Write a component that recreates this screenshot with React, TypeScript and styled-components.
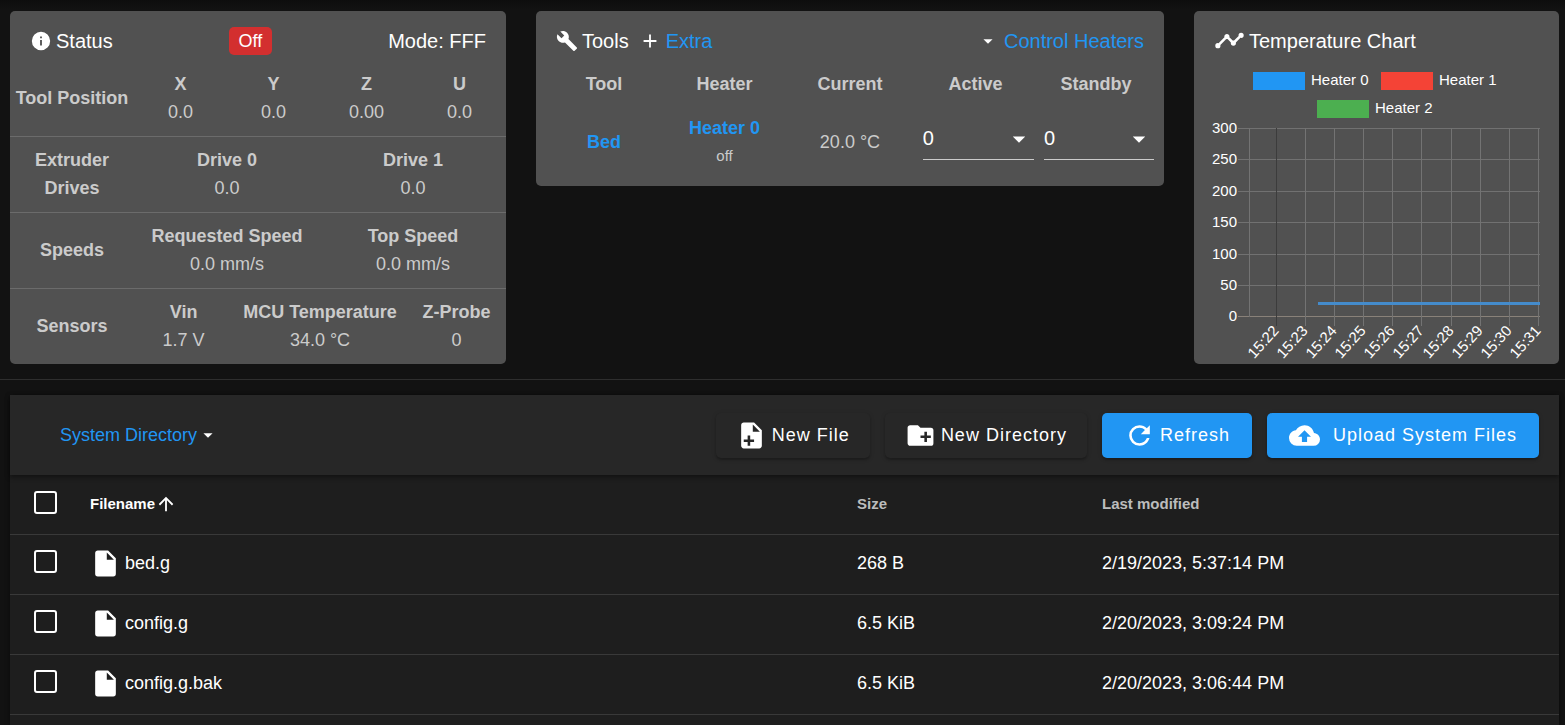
import React from "react";
import styled, { createGlobalStyle } from "styled-components";

const GlobalStyle = createGlobalStyle`
  *, *::before, *::after { box-sizing: border-box; }
  html { overflow: hidden; }
  body {
    margin: 0;
    background: #121212;
    color: #fff;
    font-family: "Liberation Sans", Arial, sans-serif;
    font-size: 18px;
    line-height: 28px;
  }
`;

const icons = {
  information:
    "M13,9H11V7H13M13,17H11V11H13M12,2A10,10 0 0,0 2,12A10,10 0 0,0 12,22A10,10 0 0,0 22,12A10,10 0 0,0 12,2Z",
  wrench:
    "M22.7,19L13.6,9.9C14.5,7.6 14,4.9 12.1,3C10.1,1 7.1,0.6 4.7,1.7L9,6L6,9L1.6,4.7C0.4,7.1 0.9,10.1 2.9,12.1C4.8,14 7.5,14.5 9.8,13.6L18.9,22.7C19.3,23.1 19.9,23.1 20.3,22.7L22.6,20.4C23.1,20 23.1,19.3 22.7,19Z",
  plus: "M19,13H13V19H11V13H5V11H11V5H13V11H19V13Z",
  menuDown: "M7,10L12,15L17,10H7Z",
  timeline:
    "M3,14L3.5,14.07L8.07,9.5C7.89,8.85 8.06,8.11 8.59,7.59C9.37,6.8 10.63,6.8 11.41,7.59C11.94,8.11 12.11,8.85 11.93,9.5L14.5,12.07L15,12C15.18,12 15.35,12 15.5,12.07L19.07,8.5C19,8.35 19,8.18 19,8A2,2 0 0,1 21,6A2,2 0 0,1 23,8A2,2 0 0,1 21,10C20.82,10 20.65,10 20.5,9.93L16.93,13.5C17,13.65 17,13.82 17,14A2,2 0 0,1 15,16A2,2 0 0,1 13,14L13.07,13.5L10.5,10.93C10.18,11 9.82,11 9.5,10.93L4.93,15.5L5,16A2,2 0 0,1 3,18A2,2 0 0,1 1,16A2,2 0 0,1 3,14Z",
  file: "M13,9V3.5L18.5,9M6,2C4.89,2 4,2.89 4,4V20A2,2 0 0,0 6,22H18A2,2 0 0,0 20,20V8L14,2H6Z",
  filePlus:
    "M14 2H6C4.89 2 4 2.89 4 4V20C4 21.11 4.89 22 6 22H18C19.11 22 20 21.11 20 20V8L14 2M11 15V12H9V15H6V17H9V20H11V17H14V15H11M13 9V3.5L18.5 9H13Z",
  folderPlus:
    "M10,4L12,6H20A2,2 0 0,1 22,8V18A2,2 0 0,1 20,20H4C2.89,20 2,19.1 2,18V6C2,4.89 2.89,4 4,4H10M15,9V12H12V14H15V17H17V14H20V12H17V9H15Z",
  refresh:
    "M17.65,6.35C16.2,4.9 14.21,4 12,4A8,8 0 0,0 4,12A8,8 0 0,0 12,20C15.73,20 18.84,17.45 19.73,14H17.65C16.83,16.33 14.61,18 12,18A6,6 0 0,1 6,12A6,6 0 0,1 12,6C13.66,6 15.14,6.69 16.22,7.78L13,11H20V4L17.65,6.35Z",
  cloudUpload:
    "M14,13V17H10V13H7L12,8L17,13M19.35,10.03C18.67,6.59 15.64,4 12,4C9.11,4 6.6,5.64 5.35,8.03C2.34,8.36 0,10.9 0,14A6,6 0 0,0 6,20H19A5,5 0 0,0 24,15C24,12.36 21.95,10.22 19.35,10.03Z",
  arrowUp: "M13,20H11V8L5.5,13.5L4.08,12.08L12,4.16L19.92,12.08L18.5,13.5L13,8V20Z",
};

const IconSvg = styled.svg<{ $size: number }>`
  display: block;
  flex: none;
  width: ${(p) => p.$size}px;
  height: ${(p) => p.$size}px;
  fill: #fff;
  fill-rule: evenodd;
`;

function Icon({ name, size = 22, className }: { name: keyof typeof icons; size?: number; className?: string }) {
  return (
    <IconSvg $size={size} viewBox="0 0 24 24" aria-hidden="true" className={className}>
      <path d={icons[name]} />
    </IconSvg>
  );
}

const Page = styled.div`
  min-height: 100vh;
  display: flex;
  flex-direction: column;
  background: linear-gradient(#0d0d0d, #121212 10px);
`;

const Dashboard = styled.section`
  display: grid;
  grid-template-columns: 496fr 628fr 365fr;
  align-items: start;
  gap: 30px;
  padding: 11px 6px 15px 10px;
`;

const Card = styled.article`
  min-width: 0;
  border-radius: 5px;
  overflow: hidden;
  background: #515151;
`;

const CardHeader = styled.header`
  display: flex;
  align-items: center;
  justify-content: space-between;
  height: 49px;
  padding: 10px 20px 0;
  font-size: 20px;
`;

const CardTitle = styled.h2`
  display: flex;
  align-items: center;
  gap: 4px;
  margin: 0;
  font-size: 20px;
  font-weight: 400;
`;

const TitleGroup = styled.div`
  display: flex;
  align-items: center;
  gap: 10px;
`;

const LinkGroup = styled.span`
  display: flex;
  align-items: center;
  gap: 5px;
`;

const Link = styled.a`
  color: #2196f3;
  text-decoration: none;
`;

const StatusChip = styled.span`
  padding: 0 10px;
  border-radius: 5px;
  background: #d32f2f;
  font-size: 18px;
  line-height: 28px;
`;

const StatusRow = styled.div`
  display: flex;
  align-items: center;
  min-height: 76px;
  padding: 9px 0 10px;
  border-top: 1px solid #6b6b6b;
  color: #cbcbcb;
  text-align: center;

  &:first-of-type {
    border-top-color: transparent;
  }
`;

const RowLabel = styled.strong`
  flex: none;
  width: 25%;
  padding: 0 5px;
`;

const Reading = styled.div`
  display: flex;
  flex-direction: column;
  flex: 1 1 0;
  padding: 0 10px;
  white-space: nowrap;
`;

const ToolsBody = styled.div`
  padding: 0 8px 10px;
`;

const ToolsTable = styled.table`
  width: 100%;
  table-layout: fixed;
  border-collapse: collapse;
  color: #cbcbcb;
  text-align: center;

  th, td { padding: 0; }
  thead th { height: 48px; }
  tbody td { height: 68px; }
`;

const ToolCol = styled.col<{ $share: number }>`
  width: ${(p) => p.$share}%;
`;

const StrongLink = styled(Link)`
  font-weight: 700;
`;

const HeaterState = styled.div`
  font-size: 15px;
`;

const SelectBox = styled.div`
  position: relative;
  margin: 0 2px 7px 8px;
  border-bottom: 1px solid #cbcbcb;
`;

const TemperatureSelect = styled.select`
  display: block;
  width: 100%;
  height: 42px;
  padding: 0;
  border: 0;
  appearance: none;
  background: transparent;
  color: #fff;
  font: inherit;
  font-size: 20px;
`;

const SelectCaret = styled(Icon)`
  position: absolute;
  top: 7px;
  right: 0;
  pointer-events: none;
`;

const ChartSvg = styled.svg`
  display: block;
  width: 100%;
  height: 304px;
  font-size: 15px;
  fill: #fff;
`;

const Divider = styled.hr`
  width: 100%;
  height: 1px;
  margin: 0;
  border: 0;
  background: #2e2e2e;
`;

const FilePanel = styled.section`
  flex: 1;
  margin: 15px 6px 0 10px;
  background: #1e1e1e;
  box-shadow: 0 1px 5px rgba(0, 0, 0, 0.4);
`;

const Toolbar = styled.div`
  position: relative;
  display: flex;
  align-items: center;
  gap: 15px;
  height: 80px;
  padding: 0 20px 0 50px;
  background: #272727;
  box-shadow: 0 2px 5px rgba(0, 0, 0, 0.45);
`;

const DirectoryLink = styled(Link)`
  display: flex;
  align-items: center;
  margin-right: auto;
`;

const ActionButton = styled.button<{ $primary?: boolean; $wide?: boolean }>`
  display: flex;
  align-items: center;
  gap: ${(p) => (p.$wide ? 13 : 5)}px;
  height: 45px;
  padding: 0 ${(p) => (p.$primary ? 22 : 20)}px;
  border: 0;
  border-radius: 5px;
  background: ${(p) => (p.$primary ? "#2196f3" : "#272727")};
  color: #fff;
  font: inherit;
  letter-spacing: 1px;
  white-space: nowrap;
  box-shadow: 0 2px 2px rgba(0, 0, 0, 0.2), 0 1px 5px rgba(0, 0, 0, 0.14);
`;

const FileTable = styled.table`
  width: 100%;
  table-layout: fixed;
  border-collapse: collapse;

  tr { border-bottom: 1px solid #393939; }
  th, td {
    height: 60px;
    padding: 0 0 2px 10px;
    text-align: left;
  }
  th {
    height: 59px;
    padding-bottom: 0;
    color: #bcbcbc;
    font-size: 15px;
  }
`;

const CheckCol = styled.col`
  width: 70px;
`;
const SizeCol = styled.col`
  width: 245px;
`;
const DateCol = styled.col`
  width: 467px;
`;

const Checkbox = styled.input`
  display: block;
  width: 23px;
  height: 23px;
  margin: 0 0 4px 14px;
  appearance: none;
  border: 2px solid #fff;
  border-radius: 3px;
`;

const SortButton = styled.button`
  display: flex;
  align-items: center;
  padding: 0;
  border: 0;
  background: none;
  color: #fff;
  font: inherit;
`;

const FileName = styled.span`
  display: flex;
  align-items: center;
  gap: 4px;
`;

const statusRows = [
  { label: "Tool Position", readings: [["X", "0.0"], ["Y", "0.0"], ["Z", "0.00"], ["U", "0.0"]] },
  { label: "Extruder Drives", readings: [["Drive 0", "0.0"], ["Drive 1", "0.0"]] },
  { label: "Speeds", readings: [["Requested Speed", "0.0 mm/s"], ["Top Speed", "0.0 mm/s"]] },
  { label: "Sensors", readings: [["Vin", "1.7 V"], ["MCU Temperature", "34.0 °C"], ["Z-Probe", "0"]] },
];

const files = [
  { name: "bed.g", size: "268 B", modified: "2/19/2023, 5:37:14 PM" },
  { name: "config.g", size: "6.5 KiB", modified: "2/20/2023, 3:09:24 PM" },
  { name: "config.g.bak", size: "6.5 KiB", modified: "2/20/2023, 3:06:44 PM" },
];

const legend = [
  { label: "Heater 0", color: "#2196f3", x: 59, y: 12 },
  { label: "Heater 1", color: "#f44336", x: 187, y: 12 },
  { label: "Heater 2", color: "#4caf50", x: 123, y: 40 },
];

const levels = [
  { value: 300, y: 68 },
  { value: 250, y: 99 },
  { value: 200, y: 131 },
  { value: 150, y: 162 },
  { value: 100, y: 194 },
  { value: 50, y: 225 },
  { value: 0, y: 256 },
];

const times = [
  { label: "15:22", x: 82 },
  { label: "15:23", x: 111 },
  { label: "15:24", x: 140 },
  { label: "15:25", x: 169 },
  { label: "15:26", x: 198 },
  { label: "15:27", x: 227 },
  { label: "15:28", x: 257 },
  { label: "15:29", x: 286 },
  { label: "15:30", x: 315 },
  { label: "15:31", x: 344 },
];

function TemperatureChart() {
  return (
    <ChartSvg viewBox="0 0 365 304" role="img" aria-label="Temperature history of the heaters">
      {legend.map((item) => (
        <g key={item.label}>
          <rect x={item.x} y={item.y} width="52" height="18" fill={item.color} />
          <text x={item.x + 58} y={item.y + 13}>{item.label}</text>
        </g>
      ))}
      {levels.map((level) => (
        <g key={level.value}>
          <rect x="44" y={level.y} width="302" height="1" fill={level.value ? "#717171" : "#898179"} />
          <text x="43" y={level.y + 5} textAnchor="end">{level.value}</text>
        </g>
      ))}
      <rect x="55" y="68" width="1" height="189" fill="#737373" />
      {times.map((time, i) => (
        <g key={time.label}>
          <rect x={time.x} y="68" width="1" height="198" fill={i ? "#737373" : "#3c3c3c"} />
          <text transform={`translate(${time.x + 2} 270) rotate(-48)`} textAnchor="end" y="2">
            {time.label}
          </text>
        </g>
      ))}
      <rect x="124" y="242" width="222" height="3" fill="#448bcb" />
    </ChartSvg>
  );
}

function TemperatureField({ label }: { label: string }) {
  return (
    <SelectBox>
      <TemperatureSelect aria-label={label} defaultValue="0">
        <option value="0">0</option>
      </TemperatureSelect>
      <SelectCaret name="menuDown" size={30} />
    </SelectBox>
  );
}

export default function App() {
  return (
    <>
      <GlobalStyle />
      <Page>
        <Dashboard>
          <Card>
            <CardHeader>
              <CardTitle><Icon name="information" />Status</CardTitle>
              <StatusChip>Off</StatusChip>
              <span>Mode: FFF</span>
            </CardHeader>
            {statusRows.map((row) => (
              <StatusRow key={row.label}>
                <RowLabel>{row.label}</RowLabel>
                {row.readings.map(([name, value]) => (
                  <Reading key={name}>
                    <strong>{name}</strong>
                    <span>{value}</span>
                  </Reading>
                ))}
              </StatusRow>
            ))}
          </Card>

          <Card>
            <CardHeader>
              <TitleGroup>
                <CardTitle><Icon name="wrench" />Tools</CardTitle>
                <LinkGroup>
                  <Icon name="plus" />
                  <Link href="#extra">Extra</Link>
                </LinkGroup>
              </TitleGroup>
              <LinkGroup>
                <Icon name="menuDown" />
                <Link href="#heaters">Control Heaters</Link>
              </LinkGroup>
            </CardHeader>
            <ToolsBody>
              <ToolsTable>
                <colgroup>
                  <ToolCol $share={19.6} />
                  <ToolCol $share={19.8} />
                  <ToolCol $share={21.2} />
                  <ToolCol $share={19.8} />
                  <ToolCol $share={19.6} />
                </colgroup>
                <thead>
                  <tr>
                    <th>Tool</th>
                    <th>Heater</th>
                    <th>Current</th>
                    <th>Active</th>
                    <th>Standby</th>
                  </tr>
                </thead>
                <tbody>
                  <tr>
                    <td><StrongLink href="#bed">Bed</StrongLink></td>
                    <td>
                      <StrongLink href="#heater-0">Heater 0</StrongLink>
                      <HeaterState>off</HeaterState>
                    </td>
                    <td>20.0 °C</td>
                    <td><TemperatureField label="Active temperature" /></td>
                    <td><TemperatureField label="Standby temperature" /></td>
                  </tr>
                </tbody>
              </ToolsTable>
            </ToolsBody>
          </Card>

          <Card>
            <CardHeader>
              <CardTitle><Icon name="timeline" size={31} />Temperature Chart</CardTitle>
            </CardHeader>
            <TemperatureChart />
          </Card>
        </Dashboard>

        <Divider />

        <FilePanel>
          <Toolbar>
            <DirectoryLink href="#system">System Directory<Icon name="menuDown" /></DirectoryLink>
            <ActionButton type="button"><Icon name="filePlus" size={31} />New File</ActionButton>
            <ActionButton type="button"><Icon name="folderPlus" size={31} />New Directory</ActionButton>
            <ActionButton type="button" $primary><Icon name="refresh" size={31} />Refresh</ActionButton>
            <ActionButton type="button" $primary $wide>
              <Icon name="cloudUpload" size={31} />Upload System Files
            </ActionButton>
          </Toolbar>
          <FileTable>
            <colgroup>
              <CheckCol />
              <col />
              <SizeCol />
              <DateCol />
            </colgroup>
            <thead>
              <tr>
                <th><Checkbox type="checkbox" aria-label="Select all files" /></th>
                <th><SortButton type="button">Filename<Icon name="arrowUp" /></SortButton></th>
                <th>Size</th>
                <th>Last modified</th>
              </tr>
            </thead>
            <tbody>
              {files.map((file) => (
                <tr key={file.name}>
                  <td><Checkbox type="checkbox" aria-label={`Select ${file.name}`} /></td>
                  <td><FileName><Icon name="file" size={31} />{file.name}</FileName></td>
                  <td>{file.size}</td>
                  <td>{file.modified}</td>
                </tr>
              ))}
            </tbody>
          </FileTable>
        </FilePanel>
      </Page>
    </>
  );
}
